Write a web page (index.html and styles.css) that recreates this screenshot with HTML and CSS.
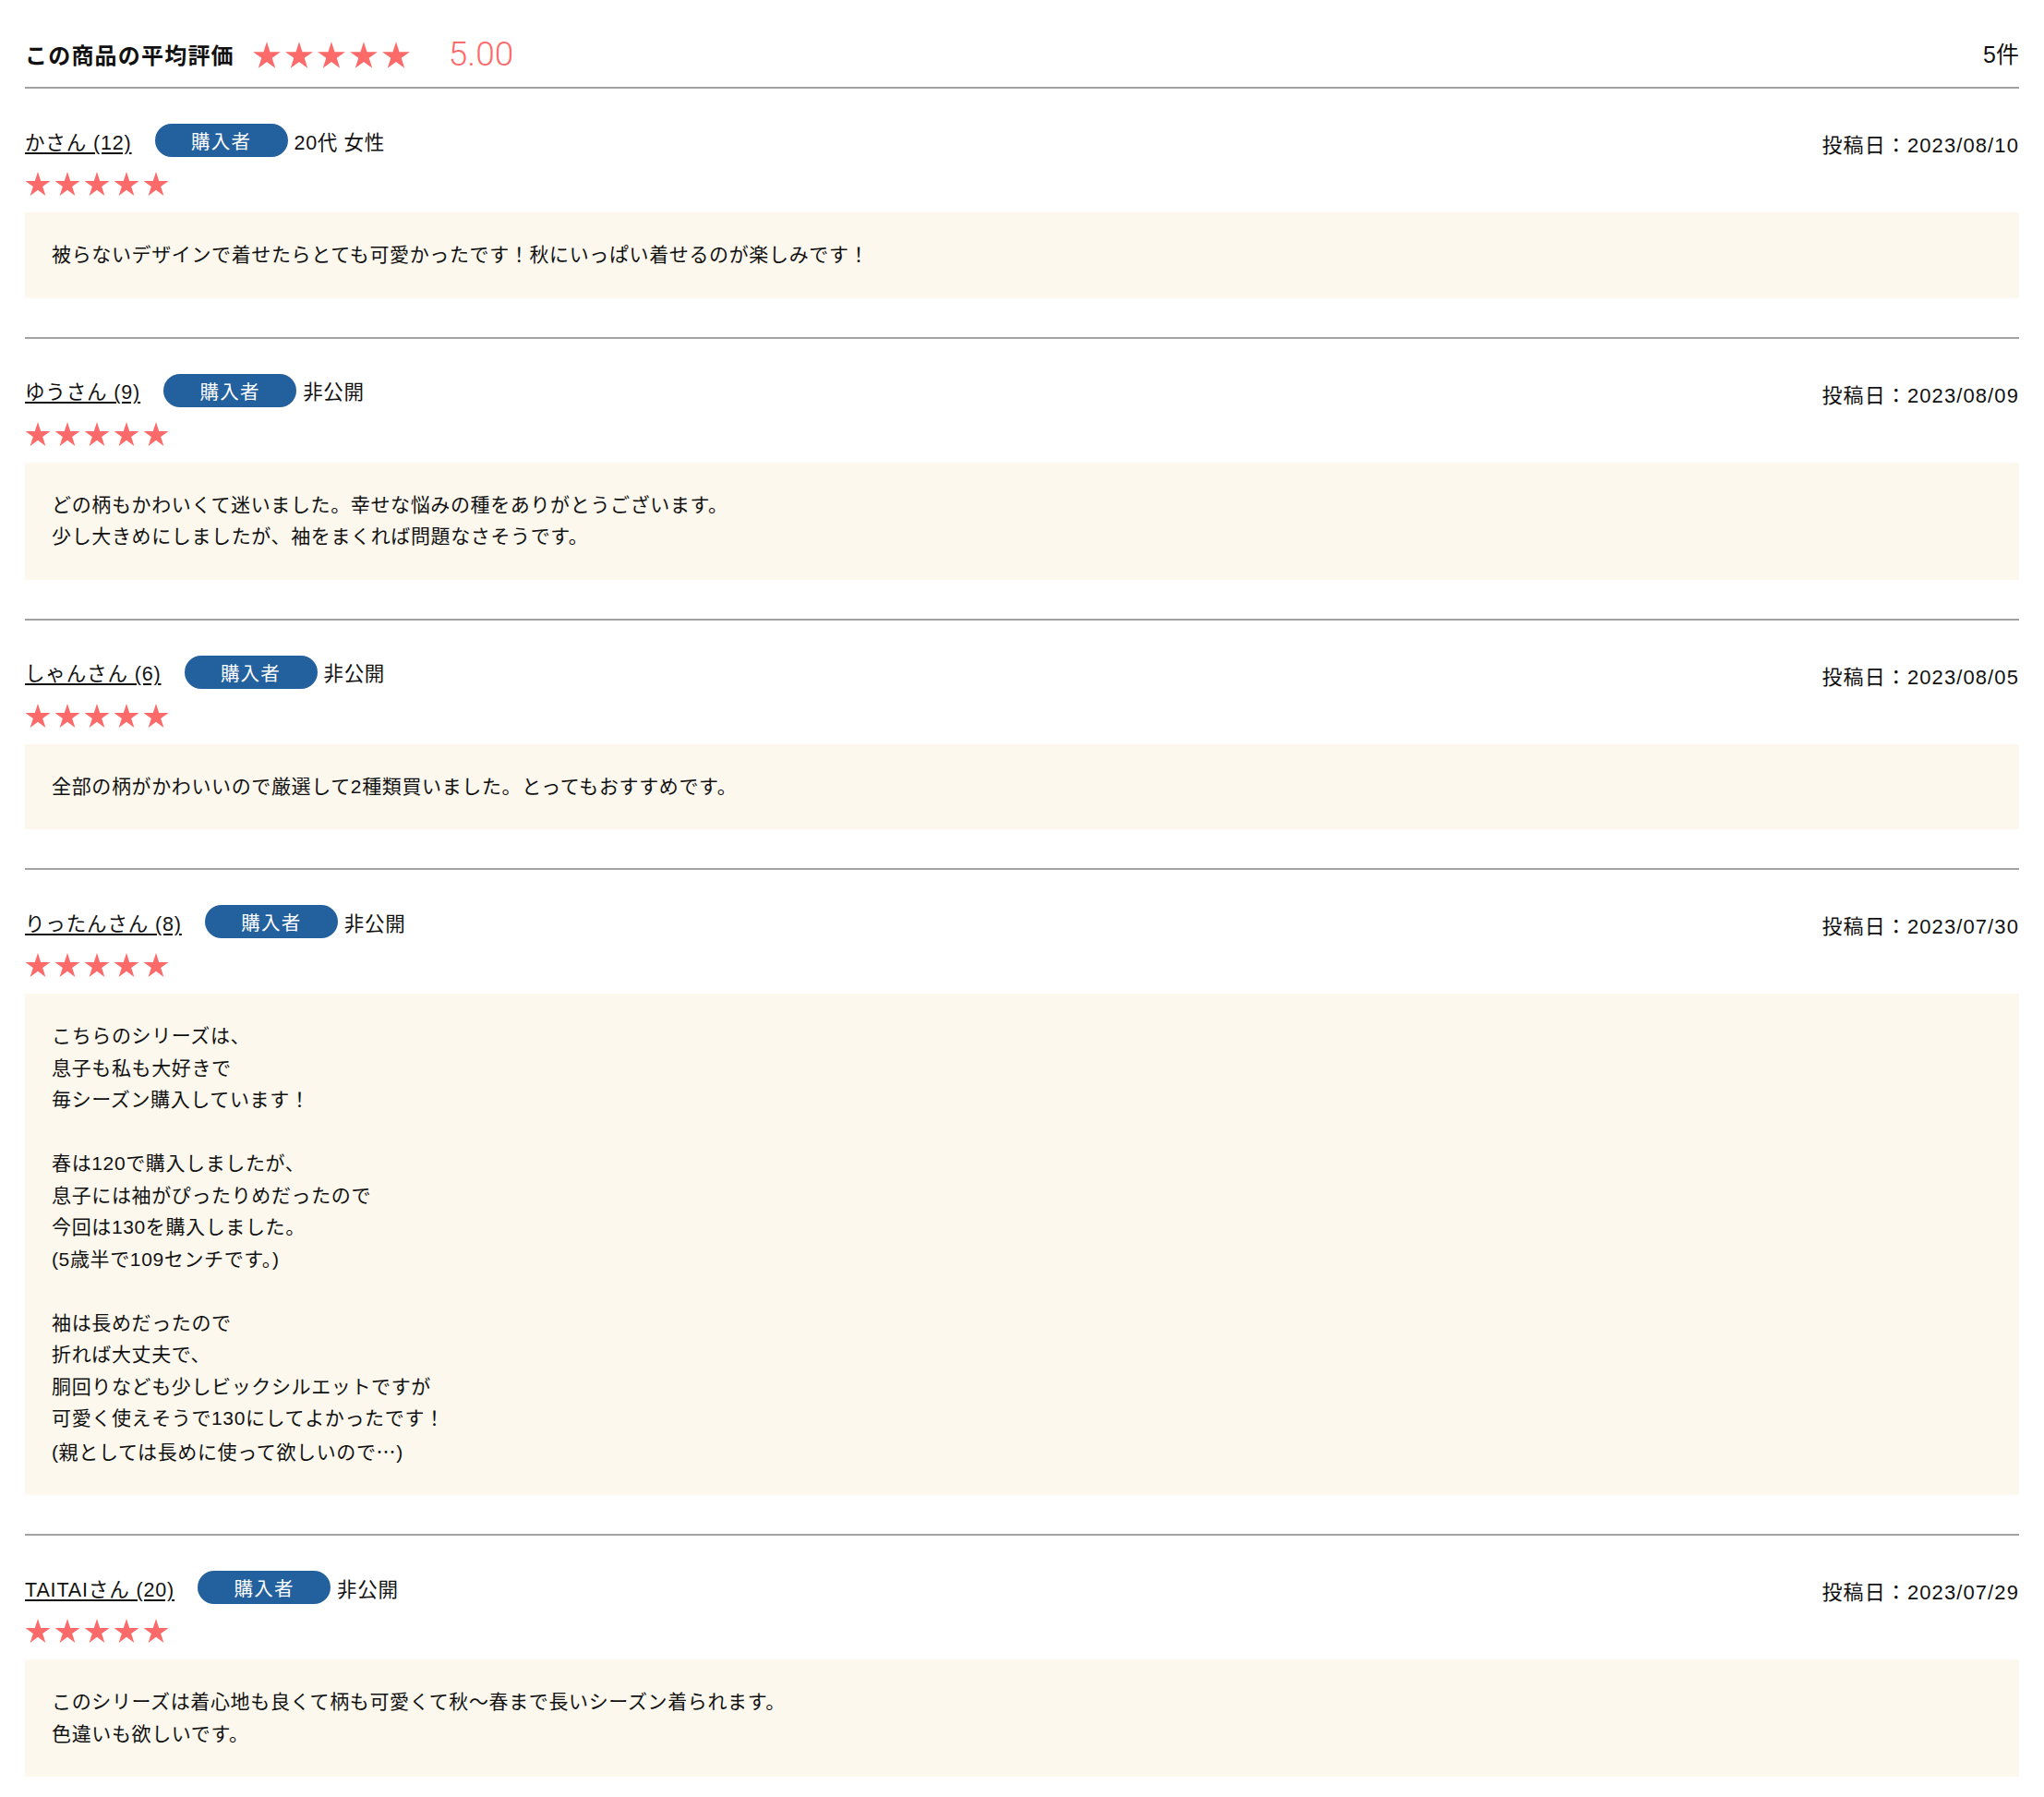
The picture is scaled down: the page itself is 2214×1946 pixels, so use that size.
FILE: index.html
```html
<!DOCTYPE html>
<html lang="ja">
<head>
<meta charset="utf-8">
<title>レビュー</title>
<link rel="stylesheet" href="styles.css">
</head>
<body>
<svg class="defs" width="0" height="0" aria-hidden="true">
  <defs>
    <symbol id="star" viewBox="1 1 22 21">
      <polygon points="12,1.1 14.58,9.05 22.94,9.05 16.18,13.96 18.76,21.9 12,16.99 5.24,21.9 7.82,13.96 1.06,9.05 9.42,9.05"/>
    </symbol>
  </defs>
</svg>
<div class="reviews">
  <div class="summary">
    <h2 class="summary-title">この商品の平均評価</h2>
    <div class="stars stars-lg">
      <svg class="star"><use href="#star"/></svg>
      <svg class="star"><use href="#star"/></svg>
      <svg class="star"><use href="#star"/></svg>
      <svg class="star"><use href="#star"/></svg>
      <svg class="star"><use href="#star"/></svg>
    </div>
    <span class="summary-score">5.00</span>
    <span class="summary-count">5件</span>
  </div>

  <ul class="review-list">
    <li class="review">
      <div class="review-head">
        <div class="review-meta">
          <div class="reviewer">
            <a class="reviewer-name" href="#">かさん (12)</a>
            <span class="badge">購入者</span>
            <span class="reviewer-attr">20代 女性</span>
          </div>
          <div class="stars stars-sm">
            <svg class="star"><use href="#star"/></svg>
            <svg class="star"><use href="#star"/></svg>
            <svg class="star"><use href="#star"/></svg>
            <svg class="star"><use href="#star"/></svg>
            <svg class="star"><use href="#star"/></svg>
          </div>
        </div>
        <div class="review-date">投稿日：2023/08/10</div>
      </div>
      <div class="review-body">
        <p>被らないデザインで着せたらとても可愛かったです！秋にいっぱい着せるのが楽しみです！</p>
      </div>
    </li>

    <li class="review">
      <div class="review-head">
        <div class="review-meta">
          <div class="reviewer">
            <a class="reviewer-name" href="#">ゆうさん (9)</a>
            <span class="badge">購入者</span>
            <span class="reviewer-attr">非公開</span>
          </div>
          <div class="stars stars-sm">
            <svg class="star"><use href="#star"/></svg>
            <svg class="star"><use href="#star"/></svg>
            <svg class="star"><use href="#star"/></svg>
            <svg class="star"><use href="#star"/></svg>
            <svg class="star"><use href="#star"/></svg>
          </div>
        </div>
        <div class="review-date">投稿日：2023/08/09</div>
      </div>
      <div class="review-body">
        <p>どの柄もかわいくて迷いました。幸せな悩みの種をありがとうございます。<br>少し大きめにしましたが、袖をまくれば問題なさそうです。</p>
      </div>
    </li>

    <li class="review">
      <div class="review-head">
        <div class="review-meta">
          <div class="reviewer">
            <a class="reviewer-name" href="#">しゃんさん (6)</a>
            <span class="badge">購入者</span>
            <span class="reviewer-attr">非公開</span>
          </div>
          <div class="stars stars-sm">
            <svg class="star"><use href="#star"/></svg>
            <svg class="star"><use href="#star"/></svg>
            <svg class="star"><use href="#star"/></svg>
            <svg class="star"><use href="#star"/></svg>
            <svg class="star"><use href="#star"/></svg>
          </div>
        </div>
        <div class="review-date">投稿日：2023/08/05</div>
      </div>
      <div class="review-body">
        <p>全部の柄がかわいいので厳選して2種類買いました。とってもおすすめです。</p>
      </div>
    </li>

    <li class="review">
      <div class="review-head">
        <div class="review-meta">
          <div class="reviewer">
            <a class="reviewer-name" href="#">りったんさん (8)</a>
            <span class="badge">購入者</span>
            <span class="reviewer-attr">非公開</span>
          </div>
          <div class="stars stars-sm">
            <svg class="star"><use href="#star"/></svg>
            <svg class="star"><use href="#star"/></svg>
            <svg class="star"><use href="#star"/></svg>
            <svg class="star"><use href="#star"/></svg>
            <svg class="star"><use href="#star"/></svg>
          </div>
        </div>
        <div class="review-date">投稿日：2023/07/30</div>
      </div>
      <div class="review-body">
        <p>こちらのシリーズは、<br>息子も私も大好きで<br>毎シーズン購入しています！<br><br>春は120で購入しましたが、<br>息子には袖がぴったりめだったので<br>今回は130を購入しました。<br>(5歳半で109センチです。)<br><br>袖は長めだったので<br>折れば大丈夫で、<br>胴回りなども少しビックシルエットですが<br>可愛く使えそうで130にしてよかったです！<br>(親としては長めに使って欲しいので<span class="cjk">…</span>)</p>
      </div>
    </li>

    <li class="review">
      <div class="review-head">
        <div class="review-meta">
          <div class="reviewer">
            <a class="reviewer-name" href="#">TAITAIさん (20)</a>
            <span class="badge">購入者</span>
            <span class="reviewer-attr">非公開</span>
          </div>
          <div class="stars stars-sm">
            <svg class="star"><use href="#star"/></svg>
            <svg class="star"><use href="#star"/></svg>
            <svg class="star"><use href="#star"/></svg>
            <svg class="star"><use href="#star"/></svg>
            <svg class="star"><use href="#star"/></svg>
          </div>
        </div>
        <div class="review-date">投稿日：2023/07/29</div>
      </div>
      <div class="review-body">
        <p>このシリーズは着心地も良くて柄も可愛くて秋〜春まで長いシーズン着られます。<br>色違いも欲しいです。</p>
      </div>
    </li>
  </ul>
</div>
</body>
</html>
```

FILE: styles.css
```css
* {
  box-sizing: border-box;
}

body {
  margin: 0;
  background: #ffffff;
  color: #111111;
  font-family: "Liberation Sans", "Noto Sans CJK JP", sans-serif;
}

.defs {
  position: absolute;
  width: 0;
  height: 0;
  overflow: hidden;
}

.cjk {
  font-family: "Noto Sans CJK JP", sans-serif;
}

.reviews {
  padding: 0 27px 27px;
}

/* ---------- summary ---------- */
.summary {
  display: flex;
  align-items: center;
  height: 96px;
  padding-top: 40px;
  padding-bottom: 16px;
  border-bottom: 2px solid #a3a3a3;
}

.summary-title {
  margin: 0;
  font-family: "Noto Sans CJK JP", sans-serif;
  font-size: 24px;
  font-weight: 700;
  letter-spacing: 0.05em;
  line-height: 38px;
}

.stars {
  display: flex;
  fill: #fd6a6a;
}

.stars-lg {
  margin-left: 20px;
  gap: 5px;
}

.stars-lg .star {
  width: 30px;
  height: 29px;
}

.summary-score {
  margin-left: 42px;
  font-family: Roboto, "Open Sans", sans-serif;
  font-weight: 300;
  font-size: 37px;
  line-height: 38px;
  color: #fd6a6a;
}

.summary-count {
  margin-left: auto;
  font-size: 25px;
  line-height: 38px;
}

/* ---------- review list ---------- */
.review-list {
  list-style: none;
  margin: 0;
  padding: 0;
}

.review {
  padding: 38px 0 42px;
  border-bottom: 2px solid #a3a3a3;
}

.review:last-child {
  border-bottom: none;
}

.review-head {
  display: flex;
  justify-content: space-between;
  align-items: flex-start;
}

.reviewer {
  display: flex;
  align-items: center;
  height: 36px;
}

.reviewer-name {
  margin-right: 25px;
  color: #111111;
  font-size: 21.5px;
  letter-spacing: 0.04em;
  text-decoration: underline;
  text-underline-offset: 3px;
}

.badge {
  display: inline-flex;
  align-items: center;
  justify-content: center;
  width: 144px;
  height: 36px;
  margin-right: 7px;
  border-radius: 18px;
  background: #23609e;
  color: #ffffff;
  font-size: 20.5px;
  letter-spacing: 0.06em;
}

.reviewer-attr {
  font-size: 21.5px;
  letter-spacing: 0.03em;
}

.stars-sm {
  margin-top: 16px;
  gap: 4px;
}

.stars-sm .star {
  width: 28px;
  height: 26px;
}

.review-date {
  padding-top: 7px;
  font-size: 22px;
  line-height: 34px;
  letter-spacing: 0.05em;
}

.review-body {
  margin-top: 18px;
  padding: 29px;
  background: #fcf8ee;
}

.review-body p {
  margin: 0;
  font-size: 21px;
  line-height: 34.5px;
  letter-spacing: 0.03em;
}
```
